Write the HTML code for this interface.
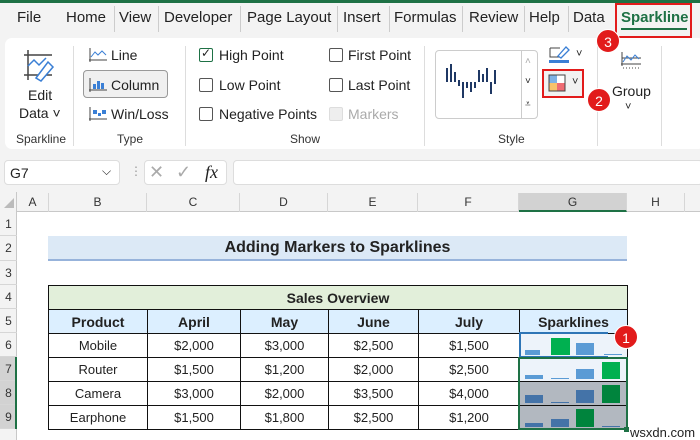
<!DOCTYPE html><html><head><style>
*{margin:0;padding:0;box-sizing:border-box}
body{width:700px;height:440px;overflow:hidden;background:#f3f3f3;font-family:"Liberation Sans",sans-serif;position:relative;font-size:13px;color:#222}
.a{position:absolute}
.tab{position:absolute;top:9px;font-size:15px;color:#222}
.sep{position:absolute;top:6px;width:1px;height:26px;background:#ccc}
.cb{position:absolute;width:14px;height:14px;border:1px solid #555;border-radius:2px;background:#fff}
.lbl{position:absolute;font-size:14px;color:#222}
.grp{position:absolute;top:132px;font-size:12px;color:#333}
.vs{position:absolute;top:46px;width:1px;height:100px;background:#ddd}
.ch{position:absolute;top:193px;height:19px;font-size:12px;text-align:center;line-height:19px;border-right:1px solid #d6d6d6;color:#333}
.rh{position:absolute;left:0;width:17px;font-size:12px;text-align:center;color:#333;border-bottom:1px solid #d6d6d6}
table{position:absolute;left:48px;top:285px;border-collapse:collapse;font-family:"Liberation Sans",sans-serif}
td{border:1.5px solid #111;height:24px;text-align:center;font-size:13px;padding:0}
.hd td{background:#dcefff;font-weight:bold;font-size:14px}
.bar{position:absolute;bottom:2px;width:15px}
.circ{position:absolute;width:24px;height:24px;border-radius:50%;background:#e21b1b;color:#fff;font-size:14px;text-align:center;line-height:24px;border:1px solid #fff}
</style></head><body>
<div class="a" style="left:0;top:0;width:700px;height:3px;background:#1e7145"></div>
<div class="a" style="left:0;top:3px;width:700px;height:33px;background:#f3f3f3"></div>
<div class="tab" style="left:17px">File</div>
<div class="tab" style="left:66px">Home</div>
<div class="sep" style="left:114px"></div>
<div class="tab" style="left:119px">View</div>
<div class="sep" style="left:158px"></div>
<div class="tab" style="left:164px">Developer</div>
<div class="sep" style="left:240px"></div>
<div class="tab" style="left:247px">Page Layout</div>
<div class="sep" style="left:337px"></div>
<div class="tab" style="left:343px">Insert</div>
<div class="sep" style="left:389px"></div>
<div class="tab" style="left:394px">Formulas</div>
<div class="sep" style="left:462px"></div>
<div class="tab" style="left:469px">Review</div>
<div class="sep" style="left:524px"></div>
<div class="tab" style="left:529px">Help</div>
<div class="sep" style="left:568px"></div>
<div class="tab" style="left:573px">Data</div>
<div class="tab" style="left:621px;color:#1e7145;font-weight:bold">Sparkline</div>
<div class="a" style="left:621px;top:28px;width:66px;height:2px;background:#1e7145"></div>
<div class="a" style="left:615px;top:3px;width:77px;height:35px;border:2px solid #e21b1b"></div>
<!-- ribbon -->
<div class="a" style="left:5px;top:38px;width:700px;height:111px;background:#fff;border-radius:7px"></div>
<svg class="a" style="left:22px;top:48px" width="40" height="36"><path d="M6 2V32M2 7H30M2 27H30" stroke="#444" stroke-width="1.5" fill="none"/><path d="M6 18L12 12L17 17L24 10" stroke="#3a7fd5" stroke-width="1.5" fill="none"/><path d="M14 30L26 14L31 19L19 33Z" fill="#fff" stroke="#3a7fd5" stroke-width="1.5"/></svg>
<div class="lbl" style="left:28px;top:87px">Edit</div>
<div class="lbl" style="left:19px;top:105px">Data ˅</div>
<div class="grp" style="left:16px">Sparkline</div>
<div class="vs" style="left:73px"></div>
<svg class="a" style="left:88px;top:47px" width="20" height="16"><path d="M2 1V15M1 13H19" stroke="#444"/><path d="M3 10L7 5L10 8L14 4L18 8" stroke="#3a7fd5" fill="none"/></svg>
<div class="lbl" style="left:111px;top:47px">Line</div>
<div class="a" style="left:83px;top:70px;width:85px;height:28px;border:1px solid #999;border-radius:4px;background:#f0f0f0"></div>
<svg class="a" style="left:88px;top:77px" width="20" height="16"><path d="M2 1V15M1 13H19" stroke="#444"/><rect x="5" y="7" width="3" height="5" fill="#3a7fd5"/><rect x="9" y="4" width="3" height="8" fill="#3a7fd5"/><rect x="13" y="6" width="3" height="6" fill="#3a7fd5"/></svg>
<div class="lbl" style="left:111px;top:77px">Column</div>
<svg class="a" style="left:88px;top:106px" width="20" height="16"><path d="M2 1V15M1 13H19" stroke="#444"/><rect x="5" y="4" width="4" height="4" fill="#3a7fd5"/><rect x="10" y="7" width="3" height="3" fill="#3a7fd5"/><rect x="14" y="4" width="4" height="4" fill="#3a7fd5"/></svg>
<div class="lbl" style="left:111px;top:106px">Win/Loss</div>
<div class="grp" style="left:117px">Type</div>
<div class="vs" style="left:185px"></div>
<div class="cb" style="left:199px;top:48px;border-color:#1e7145"></div><div class="a" style="left:201px;top:46px;font-size:12px">✓</div>
<div class="lbl" style="left:219px;top:47px">High Point</div>
<div class="cb" style="left:199px;top:78px"></div><div class="lbl" style="left:219px;top:77px">Low Point</div>
<div class="cb" style="left:199px;top:107px"></div><div class="lbl" style="left:219px;top:106px">Negative Points</div>
<div class="cb" style="left:329px;top:48px"></div><div class="lbl" style="left:348px;top:47px">First Point</div>
<div class="cb" style="left:329px;top:78px"></div><div class="lbl" style="left:348px;top:77px">Last Point</div>
<div class="cb" style="left:329px;top:107px;background:#eee;border-color:#ddd"></div><div class="lbl" style="left:348px;top:106px;color:#aaa">Markers</div>
<div class="grp" style="left:290px">Show</div>
<div class="vs" style="left:424px"></div>
<div class="a" style="left:435px;top:50px;width:103px;height:69px;border:1px solid #ccc;border-radius:4px"></div>
<div class="a" style="left:521px;top:50px;width:17px;height:69px;border-left:1px solid #ccc"></div>
<div class="a" style="left:525px;top:56px;font-size:10px;color:#aaa">˄</div>
<div class="a" style="left:525px;top:76px;font-size:10px">˅</div>
<div class="a" style="left:525px;top:99px;font-size:10px">⩡</div>
<svg class="a" style="left:443px;top:60px" width="75" height="40"><g fill="#1f3864"><rect x="3" y="8" width="2" height="14"/><rect x="7" y="4" width="2" height="18"/><rect x="11" y="12" width="2" height="10"/><rect x="15" y="20" width="2" height="6"/><rect x="19" y="22" width="2" height="16"/><rect x="23" y="22" width="2" height="6"/><rect x="27" y="22" width="2" height="10"/><rect x="31" y="22" width="2" height="6"/><rect x="35" y="10" width="2" height="12"/><rect x="39" y="14" width="2" height="8"/><rect x="43" y="8" width="2" height="14"/><rect x="47" y="22" width="2" height="12"/><rect x="51" y="10" width="2" height="14"/></g></svg>
<div class="grp" style="left:498px">Style</div>
<svg class="a" style="left:548px;top:44px" width="24" height="20"><path d="M2 4H12M2 4V13H14" stroke="#444" fill="none"/><path d="M10 12L18 3L21 6L13 14Z" fill="#fff" stroke="#3a7fd5" stroke-width="1.3"/><rect x="1" y="16" width="20" height="3" fill="#3a7fd5"/></svg>
<div class="a" style="left:576px;top:48px;font-size:11px">˅</div>
<div class="a" style="left:542px;top:69px;width:42px;height:29px;border:2px solid #e21b1b;background:#f2f2f2"></div>
<svg class="a" style="left:548px;top:74px" width="20" height="20"><rect x="1" y="1" width="8" height="8" fill="#7fb2e5"/><rect x="9" y="1" width="8" height="8" fill="#fff"/><rect x="1" y="9" width="8" height="8" fill="#f7c26b"/><rect x="9" y="9" width="8" height="8" fill="#ef6b73"/><rect x="1" y="1" width="16" height="16" fill="none" stroke="#444"/></svg>
<div class="a" style="left:572px;top:76px;font-size:11px">˅</div>
<div class="vs" style="left:597px"></div>
<svg class="a" style="left:620px;top:50px" width="22" height="20"><path d="M2 2V16M1 14H21M2 8H21" stroke="#444" fill="none"/><path d="M3 12L7 6L11 10L15 5L19 9" stroke="#3a7fd5" fill="none"/><path d="M3 18H21" stroke="#444" stroke-dasharray="1 2"/></svg>
<div class="lbl" style="left:612px;top:83px">Group</div>
<div class="a" style="left:625px;top:101px;font-size:11px">˅</div>
<div class="vs" style="left:661px"></div>
<div class="circ" style="left:596px;top:29px">3</div>
<div class="circ" style="left:587px;top:88px">2</div>
<!-- formula bar -->
<div class="a" style="left:4px;top:160px;width:116px;height:25px;background:#fff;border:1px solid #ddd;border-radius:4px"></div>
<div class="a" style="left:10px;top:165px;font-size:14px">G7</div>
<div class="a" style="left:102px;top:164px;font-size:12px">⌵</div>
<div class="a" style="left:130px;top:164px;color:#999;font-size:12px">⋮</div>
<div class="a" style="left:144px;top:160px;width:83px;height:25px;background:#fff;border:1px solid #ddd;border-radius:4px"></div>
<div class="a" style="left:149px;top:162px;color:#aaa;font-size:18px">✕</div>
<div class="a" style="left:176px;top:162px;color:#aaa;font-size:18px">✓</div>
<div class="a" style="left:205px;top:162px;font-family:'Liberation Serif',serif;font-style:italic;font-size:18px">fx</div>
<div class="a" style="left:233px;top:160px;width:470px;height:25px;background:#fff;border:1px solid #ddd;border-radius:4px"></div>
<!-- grid -->
<div class="a" style="left:0;top:192px;width:700px;height:248px;background:#fff"></div>
<div class="a" style="left:0;top:192px;width:700px;height:20px;background:#f3f3f3;border-bottom:1px solid #c8c8c8"></div>
<div class="a" style="left:0;top:192px;width:17px;height:248px;background:#f3f3f3;border-right:1px solid #c8c8c8"></div>
<svg class="a" style="left:3px;top:197px" width="12" height="12"><path d="M11 1V11H1Z" fill="#bbb"/></svg>
<div class="ch" style="left:17px;width:32px">A</div>
<div class="ch" style="left:49px;width:98px">B</div>
<div class="ch" style="left:147px;width:93px">C</div>
<div class="ch" style="left:240px;width:88px">D</div>
<div class="ch" style="left:328px;width:90px">E</div>
<div class="ch" style="left:418px;width:101px">F</div>
<div class="ch" style="left:519px;width:108px;background:#d2d2d2;border-bottom:2px solid #1e7145">G</div>
<div class="ch" style="left:627px;width:58px">H</div>
<div class="rh" style="top:212px;height:24px;line-height:24px">1</div>
<div class="rh" style="top:236px;height:25px;line-height:25px">2</div>
<div class="rh" style="top:261px;height:24px;line-height:24px">3</div>
<div class="rh" style="top:285px;height:24px;line-height:24px">4</div>
<div class="rh" style="top:309px;height:24px;line-height:24px">5</div>
<div class="rh" style="top:333px;height:24px;line-height:24px">6</div>
<div class="rh" style="top:357px;height:24px;line-height:24px;background:#d2d2d2">7</div>
<div class="rh" style="top:381px;height:24px;line-height:24px;background:#d2d2d2">8</div>
<div class="rh" style="top:405px;height:24px;line-height:24px;background:#d2d2d2">9</div>
<div class="a" style="left:15px;top:357px;width:2px;height:72px;background:#1e7145"></div>
<div class="a" style="left:48px;top:236px;width:579px;height:23px;background:#dce9f6;text-align:center;font-weight:bold;font-size:16px;line-height:23px">Adding Markers to Sparklines</div>
<div class="a" style="left:48px;top:259px;width:579px;height:2px;background:#97b3db"></div>
<table>
<tr><td colspan="6" style="background:#e2efda;font-weight:bold;font-size:14px">Sales Overview</td></tr>
<tr class="hd"><td style="width:99px">Product</td><td style="width:93px">April</td><td style="width:88px">May</td><td style="width:90px">June</td><td style="width:101px">July</td><td style="width:108px">Sparklines</td></tr>
<tr><td>Mobile</td><td>$2,000</td><td>$3,000</td><td>$2,500</td><td>$1,500</td><td style="background:#edf3fa"></td></tr>
<tr><td>Router</td><td>$1,500</td><td>$1,200</td><td>$2,000</td><td>$2,500</td><td style="background:#edf3fa"></td></tr>
<tr><td>Camera</td><td>$3,000</td><td>$2,000</td><td>$3,500</td><td>$4,000</td><td style="background:#b2b8c0"></td></tr>
<tr><td>Earphone</td><td>$1,500</td><td>$1,800</td><td>$2,500</td><td>$1,200</td><td style="background:#b2b8c0"></td></tr>
</table>
<!-- sparklines -->
<div class="a" style="left:520px;top:334px;width:107px;height:23px">
<div class="bar" style="left:5px;height:5px;background:#5b9bd5"></div><div class="bar" style="left:31px;height:17px;background:#00b050;width:19px"></div><div class="bar" style="left:56px;height:12px;background:#5b9bd5;width:18px"></div><div class="bar" style="left:84px;height:1px;background:#5b9bd5;width:18px"></div></div>
<div class="a" style="left:520px;top:358px;width:107px;height:23px">
<div class="bar" style="left:5px;height:4px;background:#5b9bd5;width:18px"></div><div class="bar" style="left:31px;height:1px;background:#5b9bd5;width:18px"></div><div class="bar" style="left:56px;height:10px;background:#5b9bd5;width:18px"></div><div class="bar" style="left:82px;height:17px;background:#00b050;width:18px"></div></div>
<div class="a" style="left:520px;top:382px;width:107px;height:23px">
<div class="bar" style="left:5px;height:8px;background:#4473a8;width:18px"></div><div class="bar" style="left:31px;height:1px;background:#4473a8;width:18px"></div><div class="bar" style="left:56px;height:13px;background:#4473a8;width:18px"></div><div class="bar" style="left:82px;height:18px;background:#00843d;width:18px"></div></div>
<div class="a" style="left:520px;top:406px;width:107px;height:23px">
<div class="bar" style="left:5px;height:4px;background:#4473a8;width:18px"></div><div class="bar" style="left:31px;height:8px;background:#4473a8;width:18px"></div><div class="bar" style="left:56px;height:18px;background:#00843d;width:18px"></div><div class="bar" style="left:82px;height:1px;background:#4473a8;width:18px"></div></div>
<div class="a" style="left:519px;top:332px;width:89px;height:26px;border:2px solid #2e75b6;border-right:none"></div>
<div class="a" style="left:518px;top:357px;width:110px;height:73px;border:2px solid #1e7145"></div>
<div class="a" style="left:624px;top:427px;width:5px;height:5px;background:#1e7145"></div>
<div class="circ" style="left:614px;top:325px">1</div>
<div class="a" style="left:630px;top:425px;font-size:13px;color:#222;background:#fff">wsxdn.com</div>
</body></html>
